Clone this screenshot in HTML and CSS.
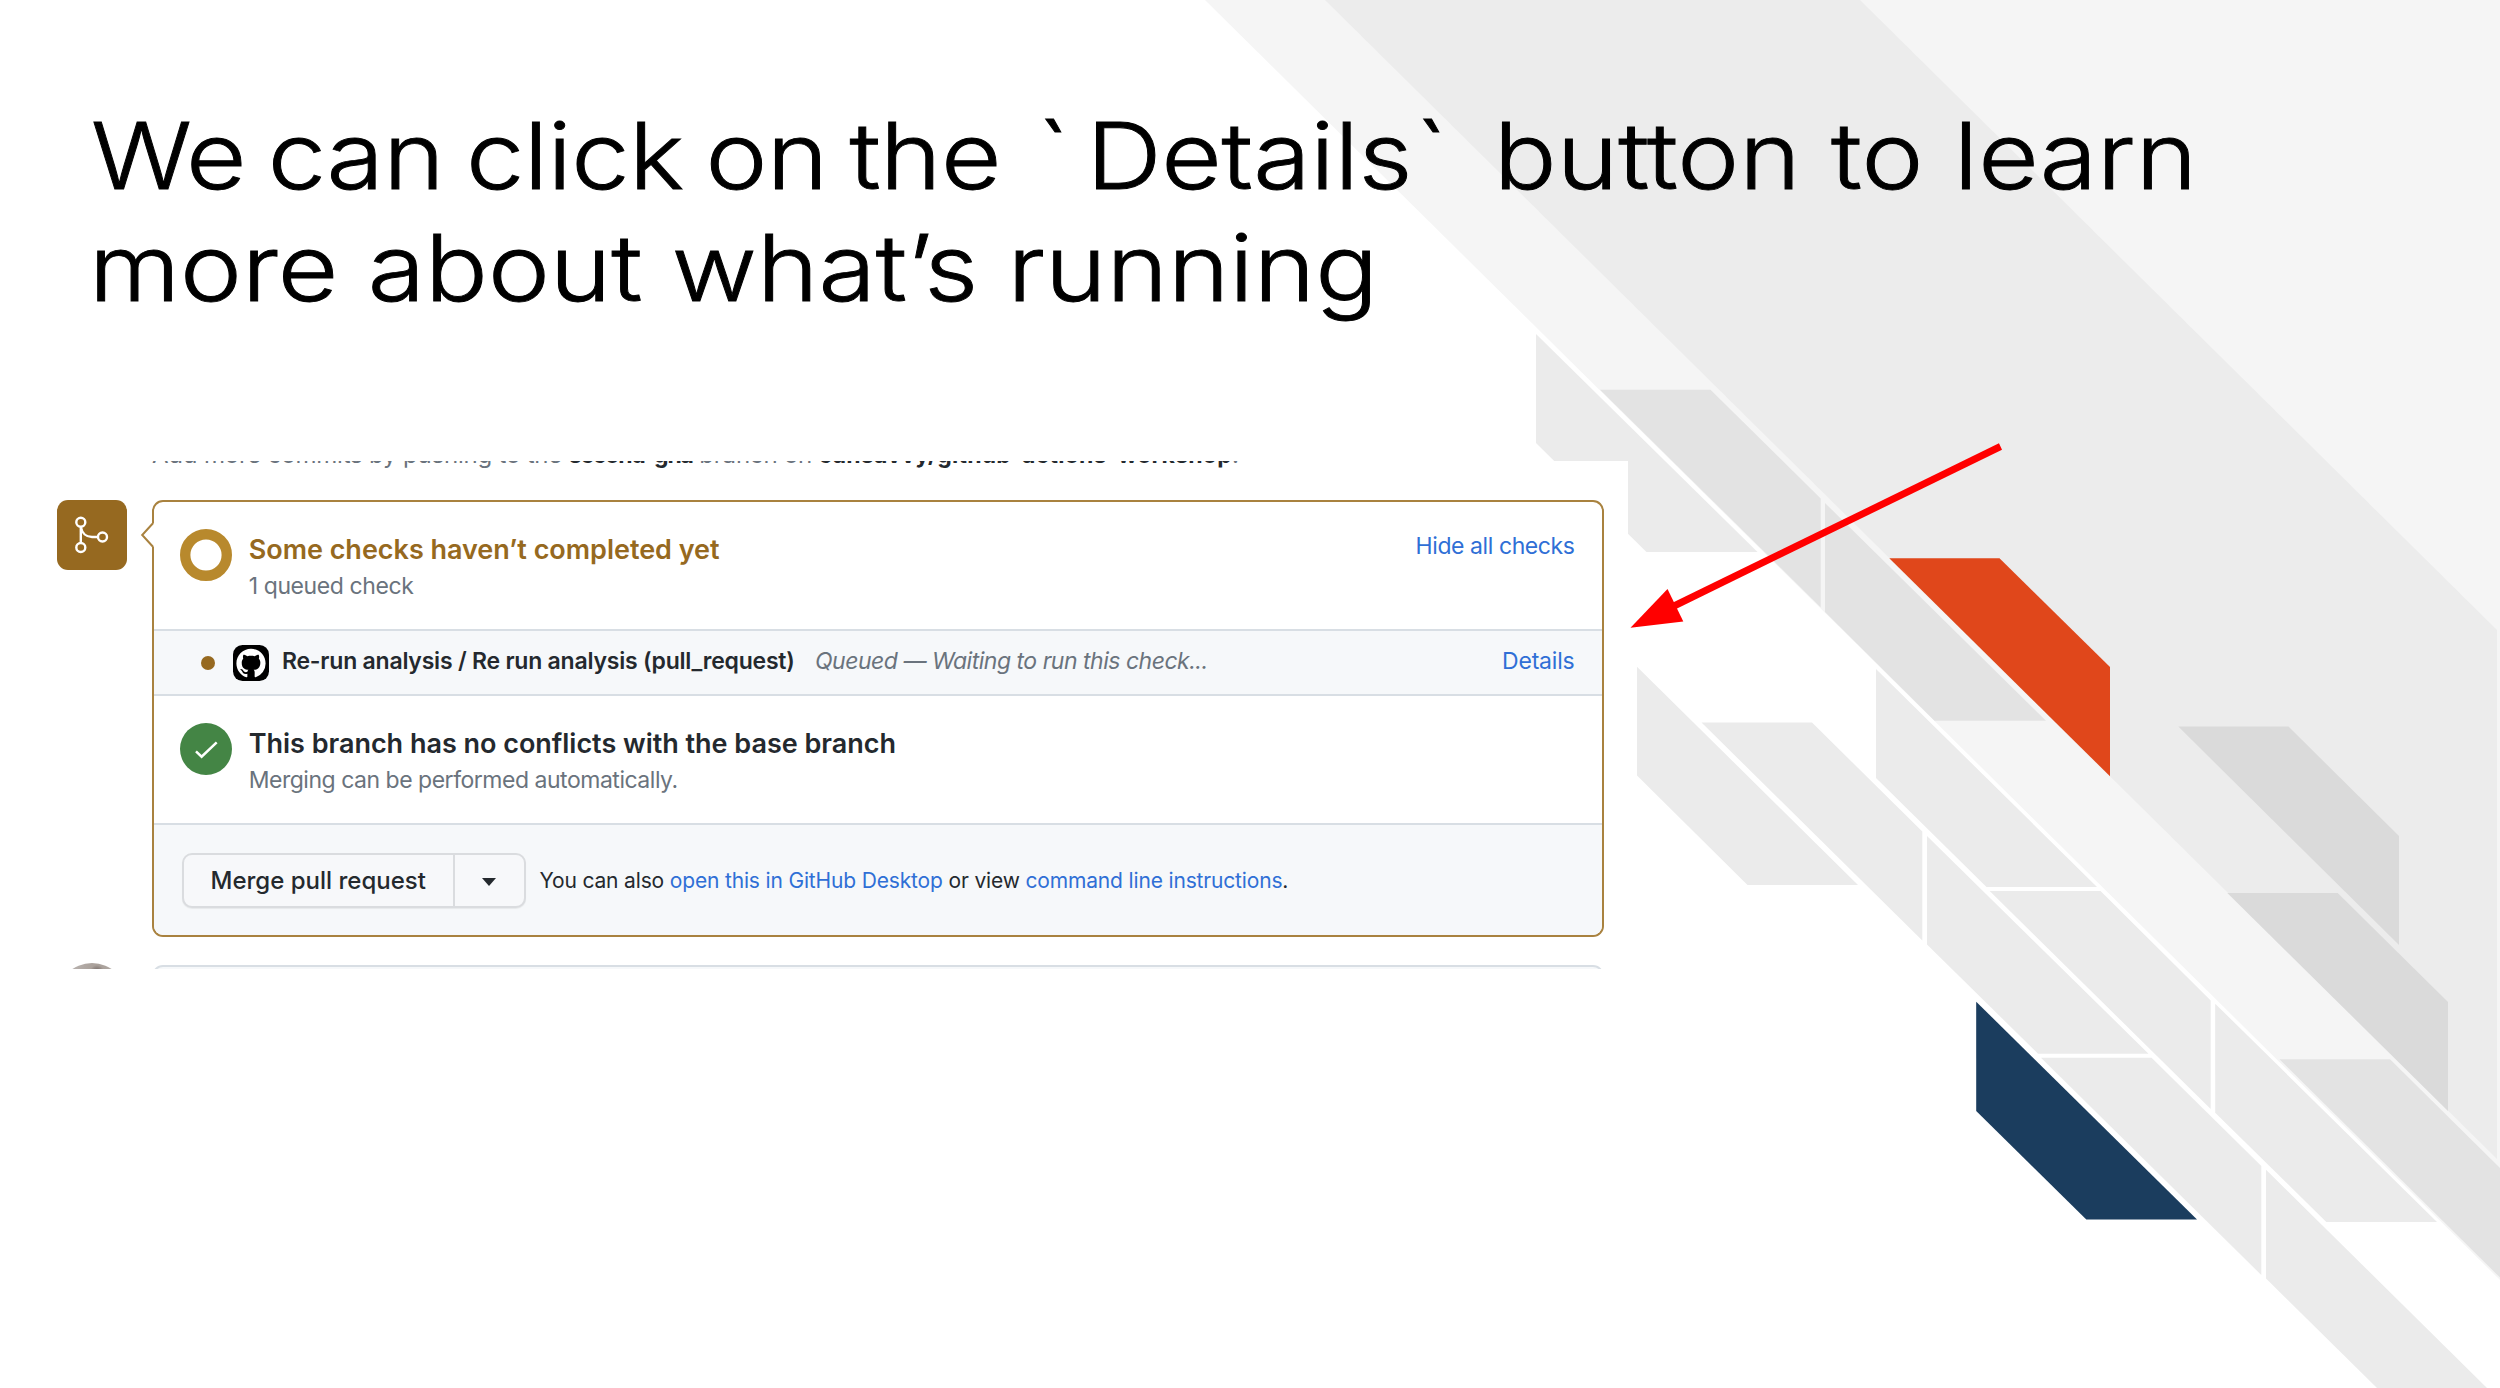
FILE: index.html
```html
<!DOCTYPE html>
<html lang="en">
<head>
<meta charset="utf-8">
<title>Details button</title>
<link rel="stylesheet" href="styles.css">
</head>
<body>
<main class="slide">
  <svg class="backdrop" viewBox="0 0 2500 1388" aria-hidden="true">
    <path fill="#f5f5f5" d="M1205 0H2500V1280Z"/>
    <path fill="#ececec" d="M1325 0H1860L2497 630V1159Z"/>
    <g fill="#ebebeb">
      <path d="M1536 334V443L1646.500 552H1757.500Z"/>
      <path d="M1637 666.700V775.500L1747.500 885H1858Z"/>
      <path d="M1701.500 722.500H1812L1922.300 831.500V940.500Z"/>
      <path d="M1876 669V778L1986.500 887H2097Z"/>
      <path d="M1927 836V944.500L2038 1053.700H2148.500Z"/>
      <path d="M1989.700 891H2100.500L2210.700 1000.500V1109Z"/>
      <path d="M2215.200 1003.700V1112.700L2326.300 1222H2437Z"/>
      <path d="M2041 1057.700H2151.500L2261.300 1166V1275Z"/>
      <path d="M2266 1169.700V1278.500L2377 1388H2487Z"/>
    </g>
    <g fill="#e3e3e3">
      <path d="M1600 389.700H1710.500L1820.700 498.500V607.500Z"/>
      <path d="M1825 503V612L1934.500 720.700H2046Z"/>
      <path d="M2279.500 1059.300H2390L2500 1168V1277.500Z"/>
    </g>
    <g fill="#dadada">
      <path d="M2178.300 726.600H2288.500L2399 836V945Z"/>
      <path d="M2227.300 893H2337.700L2448 1002V1111Z"/>
    </g>
    <path fill="#e0471b" d="M1889.300 558.300H1999.500L2110 667V776.300Z"/>
    <path fill="#1b3d5e" d="M1976.200 1001.700V1111L2086.300 1219.500H2197Z"/>
  </svg>

  <h1 class="title">
    <span class="title-line"><span class="lead">We can click on the</span><span class="tick">`</span><span class="name">Details</span><span class="tick-end">`</span><span class="tail">button to learn</span></span>
    <span class="title-line second">more about what’s running</span>
  </h1>

  <section class="shot">
    <p class="note">Add more commits by pushing to the <b class="branch">second-gha</b> branch on <b class="repo">cansavvy/github-actions-workshop</b>.</p>
    <div class="timeline">
      <div class="badge">
        <svg viewBox="0 0 70 70" fill="none" stroke="#fff" stroke-width="2.400">
          <circle cx="23.800" cy="22.300" r="4.500"/><circle cx="23.800" cy="47.500" r="4.500"/><circle cx="45.500" cy="37" r="4.500"/>
          <path d="M23.800 27V43M23.800 27C25 33.500 29.500 37 35 37H41"/>
        </svg>
      </div>
      <div class="panel">
        <svg class="notch" viewBox="0 0 15 26"><path d="M15 1H13.200L2.200 13L13.200 25H15" fill="#fff"/><path d="M13.200 1L2.200 13L13.200 25" fill="none" stroke="#a9823f" stroke-width="2"/></svg>
        <div class="status">
          <svg class="mark" viewBox="0 0 52 52"><circle cx="26" cy="26" r="20.800" fill="none" stroke="#b8892d" stroke-width="10.400"/></svg>
          <div class="copy">
            <h2 class="pending">Some checks haven’t completed yet</h2>
            <p class="queued">1 queued check</p>
          </div>
          <a class="link toggle">Hide all checks</a>
        </div>
        <div class="check">
          <span class="dot"></span>
          <svg class="octocat" viewBox="0 0 36 36">
            <rect width="36" height="36" rx="9.500"/>
            <path fill="#fff" transform="translate(3.400 3.800) scale(1.825)" d="M8 0C3.580 0 0 3.580 0 8c0 3.540 2.290 6.530 5.470 7.590.4.070.55-.17.55-.38 0-.19-.01-.82-.01-1.490-2.010.37-2.530-.49-2.690-.94-.09-.23-.48-.94-.82-1.130-.28-.15-.68-.52-.01-.53.630-.01 1.080.58 1.230.82.720 1.210 1.870.87 2.330.66.070-.52.280-.87.510-1.070-1.780-.2-3.640-.89-3.640-3.950 0-.87.310-1.590.82-2.150-.08-.2-.36-1.020.08-2.120 0 0 .67-.21 2.200.82.640-.18 1.320-.27 2-.27s1.360.09 2 .27c1.530-1.040 2.200-.82 2.200-.82.440 1.100.16 1.920.08 2.120.51.560.82 1.270.82 2.150 0 3.070-1.870 3.750-3.650 3.950.29.250.54.730.54 1.480 0 1.070-.01 1.930-.01 2.200 0 .21.150.46.55.38A8.010 8.010 0 0 0 16 8c0-4.420-3.580-8-8-8z"/>
          </svg>
          <strong class="job">Re-run analysis / Re run analysis (pull_request)</strong>
          <em class="state">Queued — Waiting to run this check...</em>
          <a class="link details">Details</a>
        </div>
        <div class="status">
          <svg class="mark" viewBox="0 0 52 52"><circle cx="26" cy="26" r="26" fill="#448545"/><path d="M16 28.300L21.600 33.700L36.700 19.300" fill="none" stroke="#fff" stroke-width="2.500"/></svg>
          <div class="copy">
            <h2>This branch has no conflicts with the base branch</h2>
            <p class="mergeable">Merging can be performed automatically.</p>
          </div>
        </div>
        <div class="actions">
          <div class="button">
            <span class="merge">Merge pull request</span>
            <span class="more"><svg viewBox="0 0 14 8"><path d="M0 0H14L7 8Z" fill="#24292e"/></svg></span>
          </div>
          <p class="hint">You can also <a class="link">open this in GitHub Desktop</a> or view <a class="link">command line instructions</a>.</p>
        </div>
      </div>
    </div>
    <div class="comment"><span class="avatar"></span><span class="box"></span></div>
  </section>

  <svg class="arrow" viewBox="0 0 2500 1388" aria-hidden="true">
    <path d="M2000.500 446.500L1674 606" stroke="#f00" stroke-width="7"/>
    <path d="M1630.500 627.700L1667.500 589L1683.300 621.500Z" fill="#f00"/>
  </svg>
</main>
</body>
</html>
```
FILE: styles.css
```css
* { box-sizing: border-box; }
body { margin: 0; font-family: Inter, "Liberation Sans", sans-serif; color: #24292e; }
h1, h2, p { margin: 0; }

.slide { position: relative; width: 2500px; height: 1388px; overflow: hidden; background: #fff; padding-top: 99.500px; }
.backdrop, .arrow { position: absolute; left: 0; top: 0; width: 2500px; height: 1388px; }
.arrow { pointer-events: none; }

.title { position: relative; height: 361.500px; padding-left: 91px; color: #000; font-size: 92px; font-weight: 300; line-height: 112.700px; -webkit-text-stroke: 0.900px #000; }
.title-line { display: flex; width: max-content; white-space: nowrap; transform: scaleX(1.135); transform-origin: 0 0; }
.second { margin-left: -2px; }
.lead { width: 834px; letter-spacing: -0.550px; word-spacing: -6px; }
.tick { width: 43px; }
.name { width: 290px; letter-spacing: -0.200px; }
.tick-end { width: 69px; }
.tail { letter-spacing: 0; word-spacing: 1px; }

.shot { position: relative; margin-left: 57px; width: 1571px; height: 508px; overflow: hidden; background: #fff; }
.note { height: 24px; margin-top: -17.700px; padding-left: 95px; font-size: 24px; line-height: 24px; letter-spacing: -0.200px; color: #6a737d; white-space: nowrap; }
.note b { font-size: 23px; font-weight: 700; line-height: 1; color: #24292e; }
.branch { letter-spacing: -1.200px; }
.repo { letter-spacing: 0.250px; }

.timeline { display: flex; gap: 25px; margin-top: 32.700px; }
.badge { width: 70px; height: 70px; border-radius: 11px; background: #966920; }
.badge svg { display: block; width: 70px; height: 70px; }
.panel { position: relative; width: 1452px; height: 437px; border: 2px solid #a9823f; border-radius: 11px; background: #fff; }
.notch { position: absolute; left: -14px; top: 20px; width: 15px; height: 26px; }

.status { display: flex; align-items: flex-start; height: 129px; padding: 27.300px 27.500px 0 25.700px; border-bottom: 2px solid #d8dee4; }
.mark { flex: none; width: 52px; height: 52px; }
.copy { display: flex; flex-direction: column; gap: 3px; margin-left: 17px; padding-top: 5px; }
h2 { font-size: 27px; font-weight: 600; line-height: 32px; letter-spacing: -0.020px; }
.pending { color: #966920; }
.copy p { font-size: 23px; line-height: 35px; color: #6a737d; }
.copy .queued { letter-spacing: -0.400px; }
.copy .mergeable { letter-spacing: -0.480px; }
.link { color: #2f6fd6; }
.toggle { margin: 0 0 0 auto; font-size: 23px; line-height: 35px; letter-spacing: -0.420px; }

.check { display: flex; align-items: center; height: 65px; padding: 0 27.500px 0 46.500px; border-bottom: 2px solid #d8dee4; background: #f6f8fa; font-size: 23px; line-height: 35px; white-space: nowrap; }
.dot { width: 14px; height: 14px; border-radius: 50%; background: #966920; }
.octocat { width: 36px; height: 36px; margin: 0 13px 0 18.500px; }
.job, .state, .details { padding-bottom: 1.500px; }
.job { width: 533px; font-weight: 600; letter-spacing: -0.220px; }
.state { color: #6a737d; letter-spacing: -0.490px; }
.details { margin-left: auto; letter-spacing: -0.200px; }

.actions { display: flex; align-items: flex-start; height: 110px; padding: 28.300px 0 0 27.500px; border-radius: 0 0 9px 9px; background: #f6f8fa; }
.button { display: flex; width: 344px; height: 54.500px; border: 2px solid #dadcdf; border-radius: 10px; background: #f7f8fa; box-shadow: 0 1px 1px #00000010; }
.merge { width: 271px; padding-left: 27px; border-right: 2px solid #dadcdf; font-size: 24px; font-weight: 500; line-height: 51.500px; letter-spacing: 0; }
.more { display: flex; flex: 1; align-items: center; justify-content: center; }
.more svg { width: 14px; height: 8px; margin-top: 2px; }
.hint { margin-left: 14px; font-size: 21px; line-height: 55.500px; letter-spacing: -0.160px; white-space: nowrap; }

.comment { display: flex; align-items: flex-start; margin-top: 26px; }
.avatar { width: 70px; height: 70px; border-radius: 50%; background: radial-gradient(circle at 40px 9px, #665a56 0, #aaa19b 7px, #b5aeaa 20px); }
.box { width: 1452px; height: 70px; margin: 2px 0 0 25px; border: 2px solid #d8dee4; border-radius: 11px; background: #f6f8fa; }
```
